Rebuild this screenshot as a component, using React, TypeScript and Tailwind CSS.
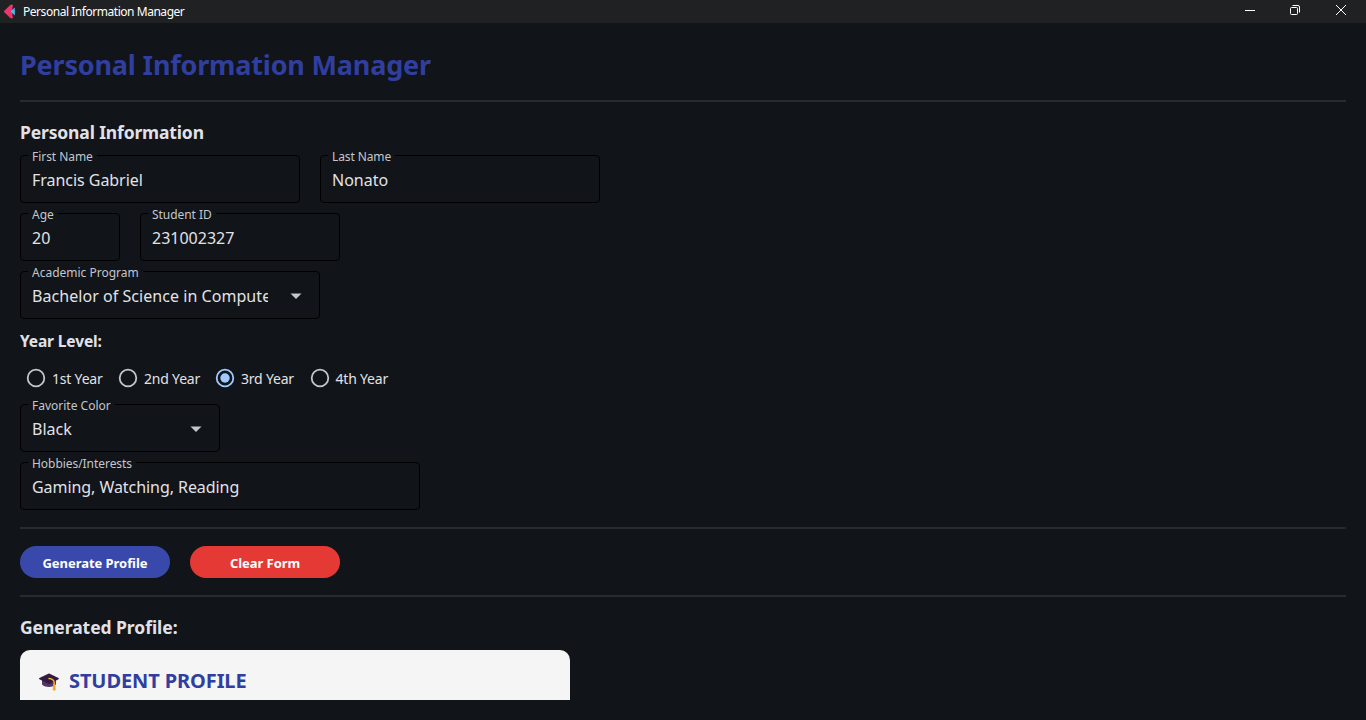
import React, { useState } from "react";

type FieldProps = {
  label: string;
  value: string;
  width: string;
  labelSpacing: string;
  valueSpacing: string;
  dropdown?: boolean;
};

function Field({ label, value, width, labelSpacing, valueSpacing, dropdown }: FieldProps) {
  return (
    <div className={`relative flex h-12 shrink-0 items-center rounded-[4px] border border-black pl-[11px] ${width}`}>
      <span className={`absolute left-[7px] top-[-8px] whitespace-nowrap bg-[#111418] px-1 text-[12px] leading-[18px] text-[#c3c6cf] ${labelSpacing}`}>
        {label}
      </span>
      <span className={`mt-[1px] flex-1 overflow-hidden whitespace-nowrap text-[16px] leading-[24px] text-[#e1e2e8] ${valueSpacing}`}>
        {value}
      </span>
      {dropdown && (
        <svg className="ml-[16px] mr-[11px] mt-px size-6 shrink-0" viewBox="0 0 24 24" fill="#c3c6cf">
          <path d="M6.500 9.500h11L12 15z" />
        </svg>
      )}
    </div>
  );
}

type RadioProps = { label: string; width: string; checked: boolean; onSelect: () => void };

function Radio({ label, width, checked, onSelect }: RadioProps) {
  return (
    <button type="button" role="radio" aria-checked={checked} onClick={onSelect} className={`flex shrink-0 items-center ${width}`}>
      <svg className="size-5 shrink-0" viewBox="0 0 20 20" fill="none">
        <circle cx="10" cy="10" r="8.3" strokeWidth="1.8" stroke={checked ? "#9ecaff" : "#c3c6cf"} />
        {checked && <circle cx="10" cy="10" r="4.7" fill="#9ecaff" />}
      </svg>
      <span className="ml-[6px] mt-[2px] whitespace-nowrap text-[14px] leading-5 tracking-[-0.2px] text-[#e1e2e8]">{label}</span>
    </button>
  );
}

function Divider() {
  return <div className="h-[2px] shrink-0 bg-[#282a2e]" />;
}

function GraduationCap() {
  return (
    <svg className="h-[20px] w-[22px] shrink-0" viewBox="0 0 22 20">
      <path d="M4 8v5.500c2 1.800 4.300 2.500 7 2.500s5.200-1 7-2.500V8z" fill="#533566" />
      <path d="M10.300 2.800q.7-.4 1.400 0L20.500 7q1 .6 0 1.200l-8.800 4.600q-.7.400-1.400 0L1.400 8.200q-1-.6 0-1.200z" fill="#321b41" />
      <path d="M11 7.500q4.800.4 5.200 4V14" fill="none" stroke="#ffb02e" strokeWidth="1.400" strokeLinecap="round" />
      <path d="M15.200 13h2l.5 6q-1.400 1-3 0z" fill="#f9a52c" />
    </svg>
  );
}

export default function App() {
  const [year, setYear] = useState(2);
  return (
    <div className="flex h-[720px] w-[1366px] flex-col overflow-hidden bg-[#111418] font-['Noto_Sans','Open_Sans',sans-serif]">
      <header className="flex h-[23px] shrink-0 items-center bg-[#202122]">
        <svg className="ml-[4px] h-[16px] w-[12px]" viewBox="0 0 12 16">
          <path d="M.3 6.800 6 1.200Q7.500 0 9 1.200L8.400 4v7L9 13.800Q7.500 15 6 13.800L.3 8.200Q-.3 7.500.3 6.800z" fill="#f4336d" />
          <path d="M6.500 7.500 10.800 3.500v8z" fill="#53b7e8" />
        </svg>
        <span className="ml-[7px] flex-1 whitespace-nowrap pt-px text-[12px] leading-4 tracking-[-0.46px] text-white">
          Personal Information Manager
        </span>
        <div className="mr-[19px] flex items-center gap-[34px] pb-[3px]">
          <svg className="-mr-px h-3 w-3" viewBox="0 0 12 12" fill="none" stroke="white" strokeWidth="1">
            <path d="M1 6.500h10" />
          </svg>
          <svg className="h-3 w-3" viewBox="0 0 12 12" fill="none" stroke="white" strokeWidth="1">
            <rect x="1.500" y="3.500" width="7" height="7" rx="1" />
            <path d="M3.500 1.500H9q1.500 0 1.500 1.500v5.500" />
          </svg>
          <svg className="h-3 w-3" viewBox="0 0 12 12" fill="none" stroke="white" strokeWidth="1">
            <path d="m1 1 10 10M11 1 1 11" />
          </svg>
        </div>
      </header>

      <main className="flex h-[677px] flex-col overflow-hidden px-5">
        <h1 className="flex h-[77px] shrink-0 items-center whitespace-nowrap pt-[6px] text-[27px] font-bold leading-10 tracking-[-0.18px] text-[#303f9f]">
          Personal Information Manager
        </h1>
        <Divider />
        <h2 className="mt-[18px] flex h-[24px] shrink-0 items-center whitespace-nowrap text-[17.5px] font-bold tracking-[-0.15px] text-[#e1e2e8]">
          Personal Information
        </h2>

        <div className="mt-[11px] flex flex-col gap-[10px]">
          <div className="flex gap-5">
            <Field label="First Name" value="Francis Gabriel" width="w-[280px]" labelSpacing="tracking-[-0.05px]" valueSpacing="tracking-[-0.04px]" />
            <Field label="Last Name" value="Nonato" width="w-[280px]" labelSpacing="tracking-[-0.1px]" valueSpacing="" />
          </div>
          <div className="flex gap-5">
            <Field label="Age" value="20" width="w-[100px]" labelSpacing="" valueSpacing="" />
            <Field label="Student ID" value="231002327" width="w-[200px]" labelSpacing="tracking-[-0.05px]" valueSpacing="" />
          </div>
          <Field label="Academic Program" value="Bachelor of Science in Computer Science" width="w-[300px]" labelSpacing="" valueSpacing="tracking-[0.05px]" dropdown />
        </div>

        <h3 className="mt-[12px] flex h-[22px] shrink-0 items-center whitespace-nowrap text-[15.5px] font-bold tracking-[-0.12px] text-[#e1e2e8]">
          Year Level:
        </h3>
        <div role="radiogroup" className="mt-[15px] flex h-[20px] shrink-0 pl-[6px]">
          <Radio label="1st Year" width="w-[92px]" checked={year === 0} onSelect={() => setYear(0)} />
          <Radio label="2nd Year" width="w-[97px]" checked={year === 1} onSelect={() => setYear(1)} />
          <Radio label="3rd Year" width="w-[94.5px]" checked={year === 2} onSelect={() => setYear(2)} />
          <Radio label="4th Year" width="w-[94px]" checked={year === 3} onSelect={() => setYear(3)} />
        </div>

        <div className="mt-[16px] flex flex-col gap-[10px]">
          <Field label="Favorite Color" value="Black" width="w-[200px]" labelSpacing="" valueSpacing="" dropdown />
          <Field label="Hobbies/Interests" value="Gaming, Watching, Reading" width="w-[400px]" labelSpacing="tracking-[-0.05px]" valueSpacing="tracking-[-0.06px]" />
        </div>

        <div className="h-[17px] shrink-0" />
        <Divider />
        <div className="flex h-[66px] shrink-0 items-center gap-5">
          <button type="button" className="flex h-8 w-[150px] items-center justify-center whitespace-nowrap rounded-full bg-[#3949ab] pt-[2px] text-[13px] font-bold leading-5 tracking-[-0.05px] text-white">
            Generate Profile
          </button>
          <button type="button" className="flex h-8 w-[150px] items-center justify-center whitespace-nowrap rounded-full bg-[#e53935] pt-[2px] text-[13px] font-bold leading-5 tracking-[-0.05px] text-white">
            Clear Form
          </button>
        </div>
        <Divider />
        <h2 className="mt-[18px] flex h-[24px] shrink-0 items-center whitespace-nowrap text-[17.5px] font-bold tracking-[-0.05px] text-[#e1e2e8]">
          Generated Profile:
        </h2>
        <section className="mt-[11px] flex h-[120px] w-[550px] shrink-0 items-start rounded-[10px] bg-[#f5f5f5] pl-[18px] pt-[18px]">
          <div className="flex h-[26px] items-center">
            <GraduationCap />
            <span className="ml-[9px] whitespace-nowrap text-[20px] font-bold leading-[26px] tracking-[-0.1px] text-[#303f9f]">STUDENT PROFILE</span>
          </div>
        </section>
      </main>
    </div>
  );
}
